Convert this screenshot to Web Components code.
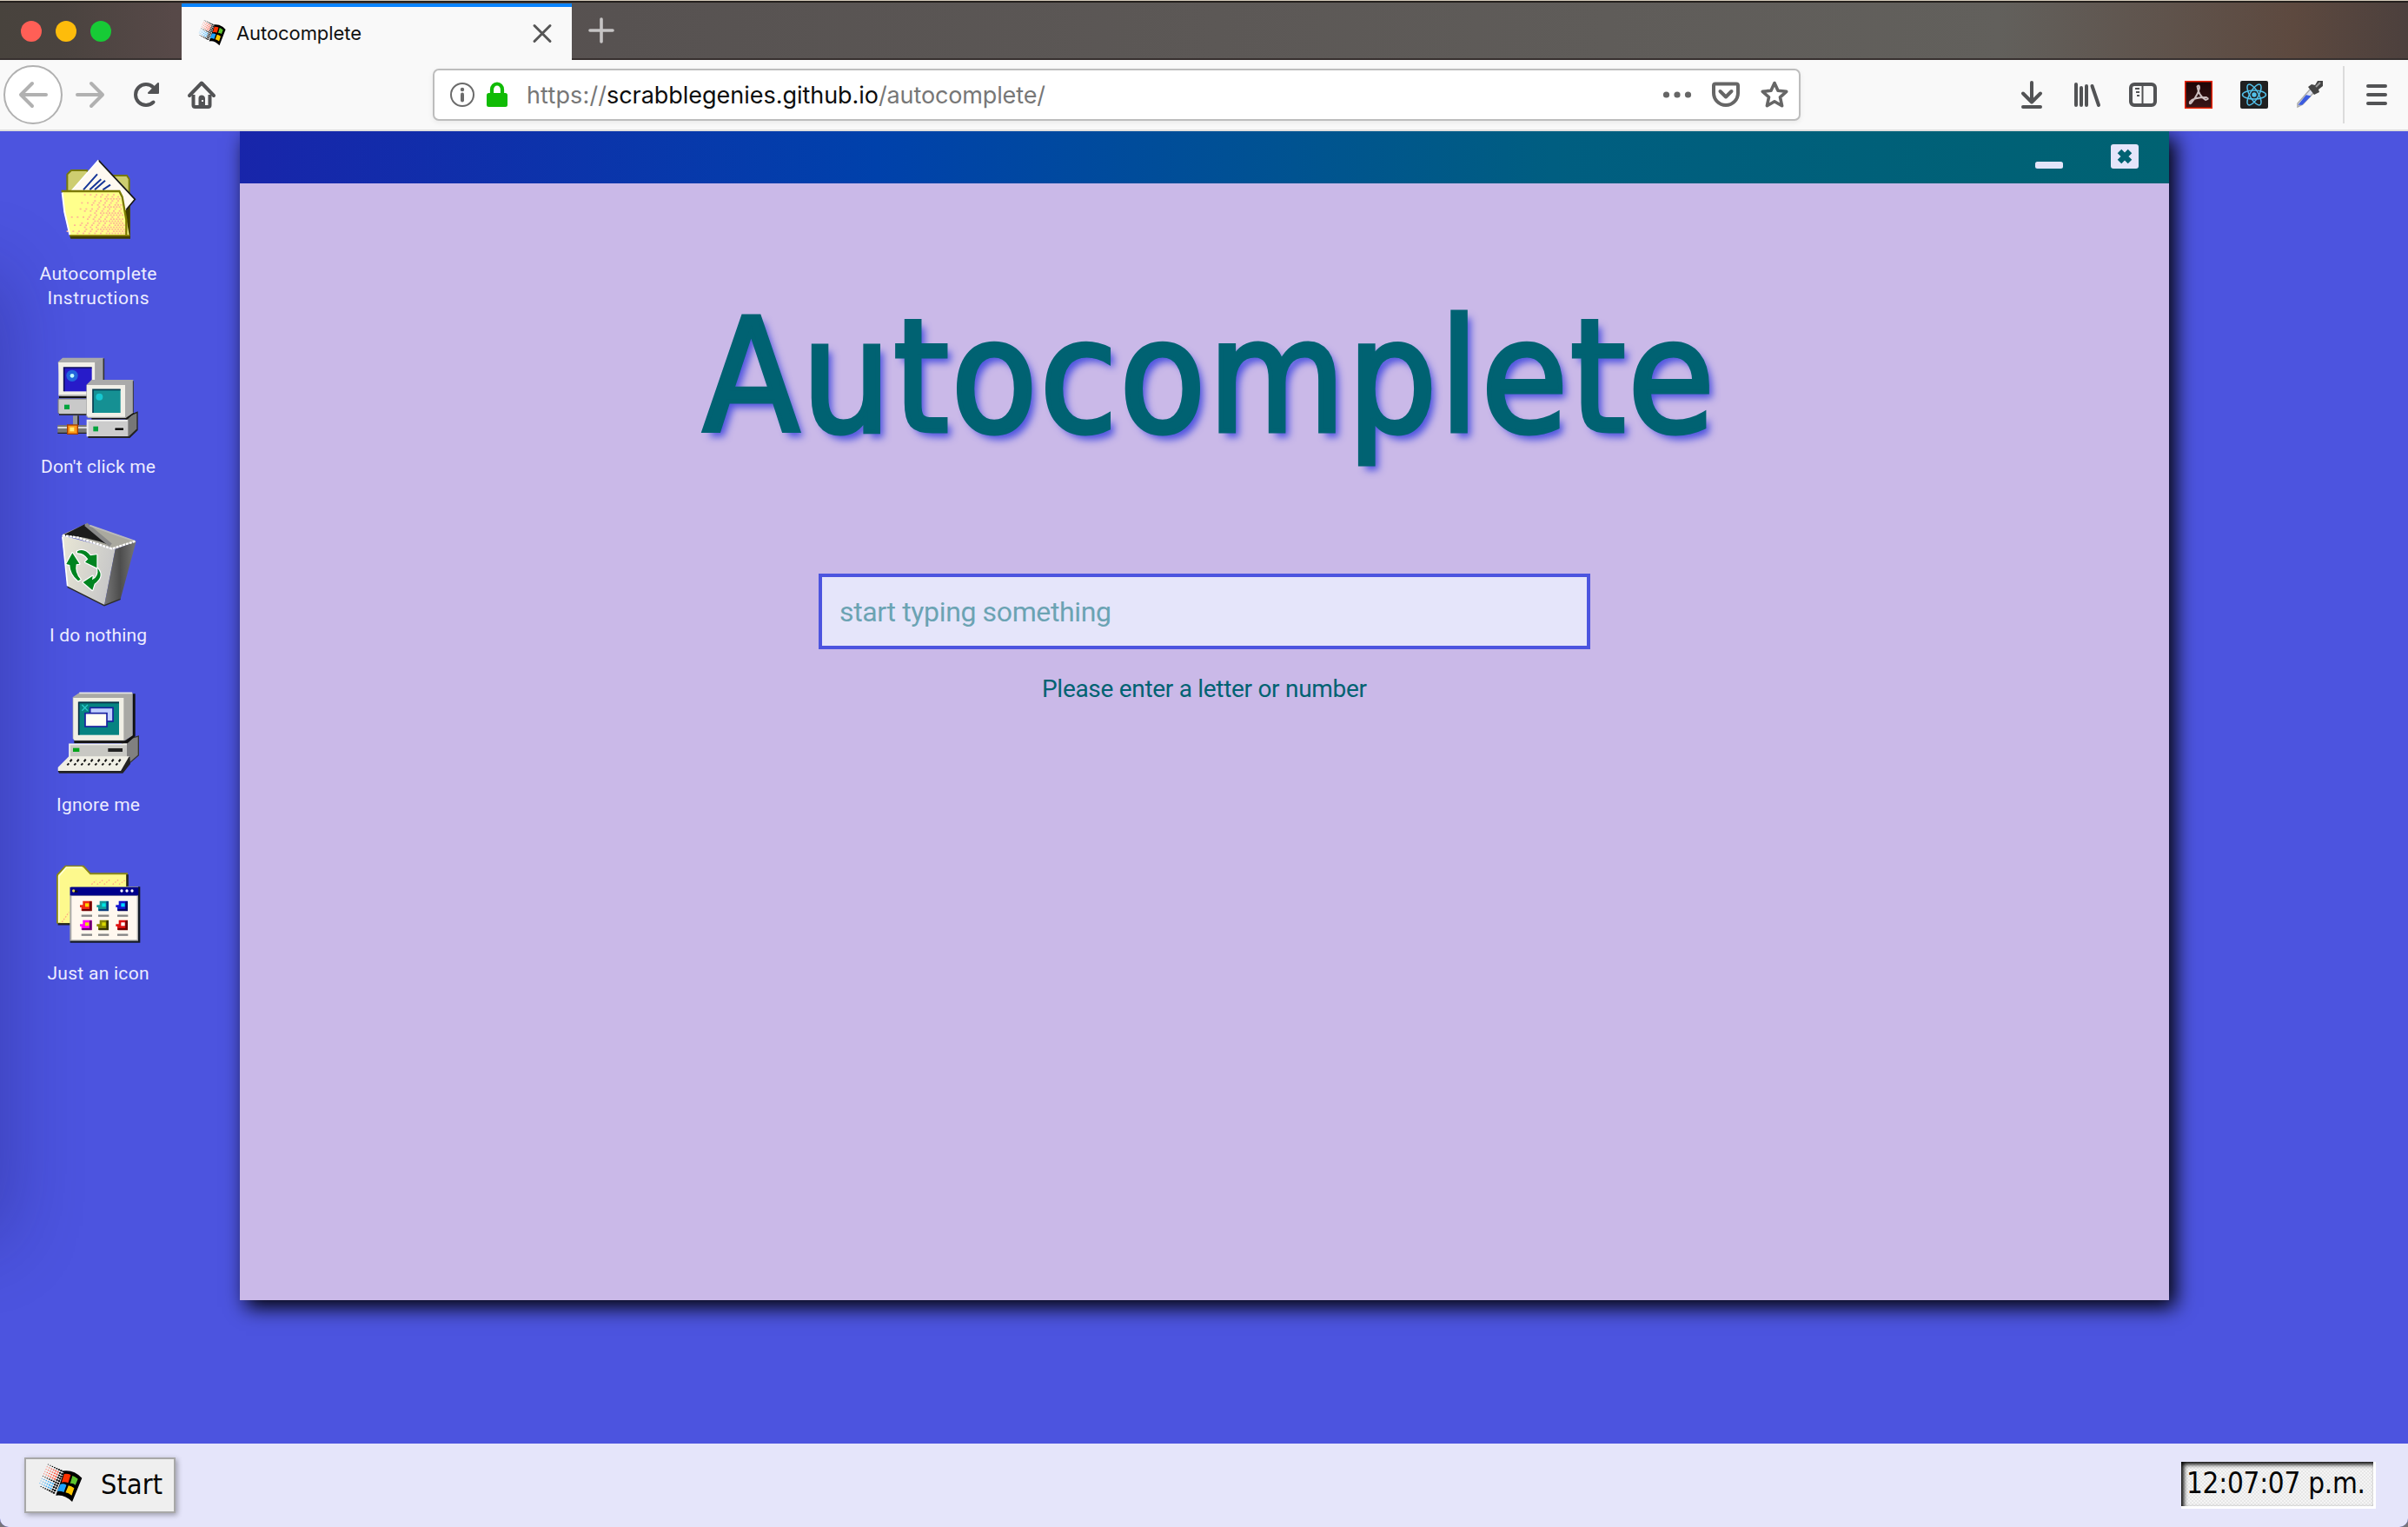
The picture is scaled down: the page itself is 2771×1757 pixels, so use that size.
<!DOCTYPE html>
<html lang="en">
<head>
<meta charset="utf-8">
<title>Autocomplete</title>
<style>
html,body{margin:0;height:100%;overflow:hidden;background:#77747a}
body{font-family:Roboto,"Liberation Sans",sans-serif}
</style>
</head>
<body>
<browser-window></browser-window>
<script>
const define=(name,html,after)=>customElements.define(name,class extends HTMLElement{
  constructor(){super();this.attachShadow({mode:'open'});}
  connectedCallback(){
    this.shadowRoot.innerHTML=typeof html==='function'?html(this):html;
    if(after)after(this);
  }
});

/* Text whose tracking is adjusted to fill a given width */
define('fit-text','<style>:host{display:inline-block;white-space:pre}span{display:inline-block}</style><span><slot></slot></span>',el=>{
  const s=el.shadowRoot.querySelector('span'),w=+el.getAttribute('w');
  const n=el.textContent.length;
  const ls=(w-s.getBoundingClientRect().width)/(n-1);
  s.style.letterSpacing=ls+'px';
  s.style.marginRight=-ls+'px';
});

/* Waving flag logo */
const flag=(()=>{
  let d='';
  for(let c=0;c<8;c++){
    const size=3+c*.62;
    for(let r=0;r<10;r++){
      const x=163+c*7.2-r*3.6, y=130+r*8.1+c*3.3;
      if(x<131)continue;
      const black=r===0||r===9||c>=6||r===5;
      const fill=black?'#000':(r<5?'#ff4a30':'#2aa6f5');
      d+=`<rect x="${x}" y="${y}" width="${size}" height="${size*.8}" fill="${fill}"/>`;
    }
  }
  return d+`<path d="M221 153Q255 150 282 178L248 260Q222 233 191 238Z" fill="#000"/>
  <path d="M220 164Q232 162 243 167L234 195Q223 190 211 193Z" fill="#ff3200"/>
  <path d="M249 170Q259 173 268 181L259 202Q251 195 241 197Z" fill="#5fc52e"/>
  <path d="M207 199Q218 196 228 202L219 227Q208 222 196 224Z" fill="#1ea2fb"/>
  <path d="M235 204Q245 206 255 213L246 238Q235 229 225 228Z" fill="#ffc800"/>`;
})();
define('flag-logo','<style>:host{display:block;flex:none}svg{display:block;width:100%;height:100%}</style><svg viewBox="130 125 154 138" preserveAspectRatio="none">'+flag+'</svg>');

const G='#525355';
const glyphs={
 back:`<path d="M31 16H3M15 3L2 16L15 29" fill="none" stroke="#b1b1b1" stroke-width="4" stroke-linecap="round" stroke-linejoin="round"/>`,
 fwd:`<path d="M1 16H29M17 3L30 16L17 29" fill="none" stroke="#b1b1b1" stroke-width="4" stroke-linecap="round" stroke-linejoin="round"/>`,
 reload:`<path d="M24.500 24.500A12 12 0 1 1 24.500 7.500L28 11" fill="none" stroke="${G}" stroke-width="4" stroke-linecap="round"/><path d="M30 3V14H19Z" fill="${G}" stroke="${G}" stroke-width="2" stroke-linejoin="round"/>`,
 home:`<path d="M2 17L16 2.500L30 17" fill="none" stroke="${G}" stroke-width="4" stroke-linecap="round" stroke-linejoin="round"/><path d="M6.500 16V28Q6.500 30 8.500 30H23.500Q25.500 30 25.500 28V16" fill="none" stroke="${G}" stroke-width="4"/><path d="M12.500 30V20Q12.500 16.500 16 16.500T20 20V30Z" fill="${G}"/><rect x="16" y="22" width="2" height="2" fill="#fff"/>`,
 info:`<circle cx="16" cy="16" r="13" fill="none" stroke="#6b6b6b" stroke-width="2"/><circle cx="16" cy="10" r="2.200" fill="#6b6b6b"/><path d="M16 15.500V22.500" stroke="#6b6b6b" stroke-width="4" stroke-linecap="round"/>`,
 lock:`<rect x="4" y="14" width="24" height="16" rx="2.500" fill="#10bb05"/><path d="M10 15V10A6 6.500 0 0 1 22 10V15" fill="none" stroke="#10bb05" stroke-width="4.200"/>`,
 dots:`<g fill="#666"><circle cx="3.500" cy="16" r="3.600"/><circle cx="16" cy="16" r="3.600"/><circle cx="28.500" cy="16" r="3.600"/></g>`,
 pocket:`<path d="M4 3.500H28Q30 3.500 30 5.500V14A14 14 0 0 1 2 14V5.500Q2 3.500 4 3.500Z" fill="none" stroke="#666" stroke-width="4"/><path d="M9.500 12L16 18.500L22.500 12" fill="none" stroke="#666" stroke-width="4" stroke-linecap="round" stroke-linejoin="round"/>`,
 star:`<path d="M16 2.500L20 11.300L29.700 12.300L22.500 18.800L24.600 28.700L16 23.700L7.400 28.700L9.500 18.800L2.300 12.300L12 11.300Z" fill="none" stroke="#666" stroke-width="3.600" stroke-linejoin="round"/>`,
 down:`<path d="M16 2V24M6 14.500L16 24.500L26 14.500M6 30H26" fill="none" stroke="${G}" stroke-width="4" stroke-linecap="round" stroke-linejoin="round"/>`,
 lib:`<path d="M3 4V28M9 8V28M15 6V28M21.500 6L29 28" fill="none" stroke="${G}" stroke-width="4" stroke-linecap="round"/>`,
 side:`<rect x="2" y="4" width="28" height="24" rx="4" fill="none" stroke="${G}" stroke-width="4"/><path d="M15.500 4V28M7 9H12M8 13H12M9 17H12" stroke="${G}" stroke-width="2"/>`,
 acro:`<defs><linearGradient id="a" x2="0" y2="1"><stop stop-color="#1c0405"/><stop offset="1" stop-color="#3b1618"/></linearGradient></defs><rect x=".7" y=".7" width="30.600" height="30.600" fill="url(#a)" stroke="#ee2200" stroke-width="1.500"/><path d="M14.500 6.500Q17 4 17 8Q16 15 8 25Q5 28 6 24Q10 19 25 19Q29 21 24 22Q16 17 14.500 6.500Z" fill="none" stroke="#cdbfc0" stroke-width="1.900"/>`,
 react:`<rect width="32" height="32" rx="2" fill="#202020"/><g fill="none" stroke="#53c1ea" stroke-width="1.500"><ellipse cx="16" cy="16" rx="13.500" ry="5"/><ellipse cx="16" cy="16" rx="13.500" ry="5" transform="rotate(60 16 16)"/><ellipse cx="16" cy="16" rx="13.500" ry="5" transform="rotate(120 16 16)"/></g><circle cx="16" cy="16" r="2.700" fill="#53c1ea"/>`,
 drop:`<path d="M17 9L21 13L8 27L2 30L2 26Z" fill="#dfe2ef" stroke="#aaa" stroke-width="1.500"/><path d="M12 17L16 18L7 27L4 27Z" fill="#3c5ce0" stroke="#3c5ce0" stroke-width="1.500"/><path d="M14 7L18 4L22 5L25 0H31V6L26 10L27 13L21 16Z" fill="#444"/><path d="M23 7L28 2" stroke="#999" stroke-width="2"/>`,
 menu:`<path d="M6 6H26M6 16H26M6 26H26" stroke="${G}" stroke-width="4" stroke-linecap="round"/>`,
 x:`<path d="M7 7.500L25 25.500M25 7.500L7 25.500" stroke="#565656" stroke-width="3" stroke-linecap="round"/>`,
 plus:`<path d="M3 16H29M16 3V29" stroke="#c6c4c4" stroke-width="3.600" stroke-linecap="round"/>`,
 min:`<rect y="22" width="32" height="8" rx="2.500" fill="#e5e5fa"/>`,
 close:`<rect y="2" width="32" height="28" rx="3" fill="#e5e5fa"/><path d="M10 10L22 22M22 10L10 22" stroke="#006272" stroke-width="6.400"/>`
};
define('glyph-icon',el=>`<style>:host{display:block;flex:none;width:32px;height:32px}svg{display:block;overflow:visible}</style><svg width="32" height="32" viewBox="0 0 32 32">${glyphs[el.getAttribute('name')]}</svg>`);

/* Desktop pictures */
const keys=[...Array(8)].map((_,i)=>`<path d="M${112+i*24} 298l6-6m4-6l6-8" stroke="#111" stroke-width="6"/>`).join('');
const mini=(x,y,a,b,c)=>`<path d="M${x} ${y}h31v34h-36v-12h-5v-8h10z" fill="${a}"/><path d="M${x+31} ${y+2}v33h-34v-7h26v-26z" fill="${b}"/><rect x="${x+8}" y="${y+8}" width="13" height="12" fill="${c}"/><path d="M${x-5} ${y+51}h37" stroke="#858585" stroke-width="7"/>`;
/* Orange dither dots that grow denser towards the lower right of the folder */
const dither=(()=>{
  let d='';
  for(let y=160,r=0;y<298;y+=7,r++)for(let x=110+(r%2)*5;x<314;x+=10){
    const t=(x-120)/190+(y-230)/420, h=((x*73+y*151)%97)/97;
    if(h<t&&x<290+(y-160)*.16)d+=`<rect x="${x}" y="${y}" width="6" height="5"/>`;
  }
  return `<g fill="#ffb596">${d}</g>`;
})();
const pics={
 folder:['48',`<path d="M112 155V92L126 78H180L190 96H318L326 108V303H125Z" fill="#cdcd70" stroke="#77790d" stroke-width="6"/>
 <path d="M120 303H330V314H124ZM305 190l24 0v115h-20z" fill="#3f3d00"/>
 <path d="M220 43L346 178L316 214L296 225L126 151Z" fill="#fff9f0"/><path d="M220 43L346 178L316 214" fill="none" stroke="#171717" stroke-width="5"/><path d="M220 43L126 150" stroke="#fff" stroke-width="5"/>
 <path d="M168 145l48-54M190 145l39-36M207 145l36-32M235 145l26-17" stroke="#153597" stroke-width="6"/>
 <path d="M96 152H292L314 230L326 302H120L101 220Z" fill="#ffff8c"/>${dither}<path d="M92 150H292L302 170L316 249V302" fill="none" stroke="#7b7a00" stroke-width="7"/><path d="M95 155L103 222L121 300" fill="none" stroke="#fff" stroke-width="6"/><path d="M120 303H328" stroke="#8b8000" stroke-width="5"/>`],
 net:['21',`<path d="M80 47L96 32H238V166H92Z" fill="#aaa"/><path d="M238 34V110" stroke="#333" stroke-width="5"/><path d="M82 48H208V162H82Z" fill="#f1efe8"/><path d="M208 48L234 34V110H208Z" fill="#a5a5a5"/><path d="M82 162H190" stroke="#aaa" stroke-width="5"/><rect x="101" y="66" width="96" height="82" fill="#271bc9"/><path d="M101 148V66H197" fill="none" stroke="#11105b" stroke-width="5"/><circle cx="129" cy="94" r="20" fill="#2166dd"/><circle cx="129" cy="94" r="7" fill="#bfffff"/>
 <path d="M84 168H182" stroke="#111" stroke-width="6"/><path d="M81 174H182V228H87L81 222Z" fill="#c9c9c9" stroke="#777" stroke-width="3"/><path d="M84 228H182" stroke="#222" stroke-width="5"/><rect x="102" y="194" width="18" height="16" fill="#00a43e"/>
 <path d="M132 232h20v34h-20z" fill="#969696"/><path d="M150 232v34" stroke="#222" stroke-width="5"/><path d="M79 264H182V292H79Z" fill="#777"/><path d="M79 273H182" stroke="#d7d7d7" stroke-width="6"/><path d="M79 292H182" stroke="#222" stroke-width="4"/><rect x="113" y="264" width="35" height="31" fill="#ff9b16" stroke="#a63d00" stroke-width="4"/><rect x="121" y="272" width="15" height="14" fill="#ffe973"/>
 <path d="M318 236L354 220V280L328 306L300 300Z" fill="#777" stroke="#222" stroke-width="4"/><path d="M182 246H322V304H182Z" fill="#ccc"/><path d="M182 304V248H320" fill="none" stroke="#efefef" stroke-width="6"/><path d="M184 306H326L354 280" fill="none" stroke="#242424" stroke-width="6"/><rect x="202" y="269" width="17" height="17" fill="#00a43e"/><rect x="276" y="273" width="31" height="10" fill="#111" stroke="#eee" stroke-width="2"/>
 <path d="M196 240H318L340 220" fill="none" stroke="#111" stroke-width="9"/><path d="M178 126L196 108H340V222L314 240H184L178 234Z" fill="#aaa"/><path d="M180 126H312V236H184L180 230Z" fill="#f1efe8"/><path d="M340 112V220" stroke="#333" stroke-width="3"/><rect x="201" y="141" width="95" height="81" fill="#159093"/><path d="M201 222V142H296" fill="none" stroke="#063b4f" stroke-width="5"/><circle cx="223" cy="167" r="12" fill="#16c7d0"/>`],
 bin:['36',`<defs><linearGradient id="g" x2="1" y2=".3"><stop stop-color="#e9e7d6"/><stop offset="1" stop-color="#c8c8c8"/></linearGradient><linearGradient id="h"><stop stop-color="#777"/><stop offset=".5" stop-color="#4d4d4d"/><stop offset="1" stop-color="#777"/></linearGradient></defs><path d="M94 76L176 38L350 98L278 126Z" fill="#aaa99f"/><path d="M96 78L172 40L258 112Q180 80 96 78Z" fill="#1c1c1c"/><path d="M176 40L262 112" stroke="#888" stroke-width="14"/><path d="M190 44L345 98" stroke="#bbb" stroke-width="6"/>
 <path d="M94 78L278 126L240 320L113 254Z" fill="url(#g)"/><path d="M278 126L350 98L296 298L240 320Z" fill="url(#h)"/><path d="M96 78L150 86L266 124L348 98" fill="none" stroke="#fff" stroke-width="7" stroke-dasharray="9 3"/><path d="M113 256L240 320L296 298" fill="none" stroke="#2d2d28" stroke-width="4"/><path d="M96 84L113 252" stroke="#fff" stroke-width="5"/>
 <path d="M147 133Q171 120 192 148L214 145V190L174 170L184 160Q168 137 147 139ZM109 177L130 139L154 176L143 178Q137 207 158 230L150 235Q122 212 121 180ZM217 192Q241 220 206 245L199 267L167 240L200 218L198 232Q221 222 217 192Z" fill="#008420" stroke="#fff" stroke-width="7" stroke-linejoin="round" paint-order="stroke"/>`],
 pc:['48',`<path d="M320 208L358 198V264L328 290H300V226Z" fill="#808080" stroke="#333" stroke-width="4"/><path d="M136 218H318L342 196V52" fill="none" stroke="#111" stroke-width="10"/><path d="M131 64L154 48H338V196L310 214H137L131 206Z" fill="#a9a9a5"/><path d="M133 66H307V212H137L133 206Z" fill="#f1efe5"/><path d="M154 49H336" stroke="#e4e4e4" stroke-width="5"/><rect x="152" y="80" width="139" height="114" fill="#078381"/><path d="M152 194V82H291" fill="none" stroke="#0b3046" stroke-width="5"/><path d="M163 90l20 20m0-20l-20 20" stroke="#29cac9" stroke-width="4"/>
 <rect x="191" y="100" width="79" height="47" fill="#bfcfff" stroke="#1921a0" stroke-width="5"/><rect x="174" y="119" width="75" height="46" fill="#fffff5" stroke="#1921a0" stroke-width="5"/>
 <path d="M120 226H318V274H120Z" fill="#c8c8c3"/><path d="M120 270V226H318" fill="none" stroke="#f2f2ed" stroke-width="5"/><rect x="132" y="239" width="22" height="13" fill="#00a41a"/><rect x="253" y="240" width="50" height="12" fill="#222"/>
 <path d="M80 318L118 270H328L330 294L304 326H84Z" fill="#222"/><path d="M80 306L118 268H326L297 318H80Z" fill="#f0efe5"/>${keys}`],
 apps:['30',`<path d="M78 77L106 47H168L192 73H318V246H88L78 242Z" fill="#fdf98d" stroke="#898616" stroke-width="6"/><path d="M83 242V82L109 51H164" fill="none" stroke="#ffffd8" stroke-width="5"/><path d="M80 247H122M320 76V116" stroke="#222" stroke-width="7"/><path d="M196 110l16-14m3 14l24-18m0 18l22-18m8 18l22-18m0 18l20-14M94 240l24-34" stroke="#ffab83" stroke-width="4" stroke-dasharray="5 5"/>
 <path d="M126 118H364V311H122Z" fill="#151b25"/><rect x="121" y="118" width="236" height="187" fill="#aaa"/><rect x="127" y="150" width="226" height="151" fill="#fff8ef"/><rect x="122" y="120" width="236" height="28" fill="#00008b"/><circle cx="134" cy="132" r="5" fill="#ddd04e"/><path d="M138 134h10" stroke="#111" stroke-width="6"/><g fill="#fff"><circle cx="300" cy="132" r="5"/><circle cx="318" cy="132" r="5"/><circle cx="336" cy="132" r="5"/></g>
 ${mini(166,167,'#ee2814','#730000','#ffd500')}${mini(224,167,'#169999','#073d7c','#00e5e5')}${mini(290,167,'#1515cd','#00005d','#00d9ff')}${mini(166,233,'#ff00ff','#6a006c','#e5e500')}${mini(224,233,'#898900','#343400','#d9d900')}${mini(290,233,'#de1010','#690000','#fff')}`]
};
define('desktop-item',el=>{
  const p=pics[el.getAttribute('pic')];
  return `<style>:host{display:flex;flex-direction:column;align-items:center;gap:19px;padding-bottom:51.2px;color:#ececff;font-size:21px;line-height:28px}
  svg{display:block;overflow:visible;width:96px;height:96px}.l{display:flex;flex-direction:column;align-items:center}</style>
  <svg viewBox="75 ${p[0]} 288 288">${p[1]}</svg><div class="l"><slot></slot></div>`;
});

define('nav-bar',`<style>:host{display:flex;align-items:center;height:80px;box-sizing:content-box;border-bottom:2px solid #dedede;background:#f9f9f9;padding-left:4px}
.back{width:64px;height:64px;border:2px solid #b1b1b1;border-radius:50%;background:#fff;display:flex;align-items:center;justify-content:center;margin-right:16px}
.g{display:flex;gap:32px;width:410px}
.url{box-sizing:border-box;width:1574px;height:60px;border:2px solid #bdbdbd;border-radius:7px;background:#fff;display:flex;align-items:center;padding:0 12px 0 16px;box-shadow:0 2px 6px #0001;font:27px/54px Inter,sans-serif;color:#777}
.url .t{display:flex;margin-left:18px;flex:1;padding-top:2px}.d{color:#0c0c0d}.url .s{display:flex;gap:24px}
.r{display:flex;gap:32px;margin-left:250px}
.m{border-left:2px solid #dcdcdc;height:66px;margin-left:22px;padding-left:21px;display:flex;align-items:center}</style>
<div class="back"><glyph-icon name="back"></glyph-icon></div>
<div class="g"><glyph-icon name="fwd"></glyph-icon><glyph-icon name="reload"></glyph-icon><glyph-icon name="home"></glyph-icon></div>
<div class="url"><glyph-icon name="info"></glyph-icon><glyph-icon name="lock" style="margin-left:8px"></glyph-icon>
<div class="t"><fit-text w="92">https://</fit-text><fit-text class="d" w="313">scrabblegenies.github.io</fit-text><fit-text w="192">/autocomplete/</fit-text></div>
<div class="s"><glyph-icon name="dots"></glyph-icon><glyph-icon name="pocket"></glyph-icon><glyph-icon name="star"></glyph-icon></div></div>
<div class="r"><glyph-icon name="down"></glyph-icon><glyph-icon name="lib"></glyph-icon><glyph-icon name="side"></glyph-icon><glyph-icon name="acro"></glyph-icon><glyph-icon name="react"></glyph-icon><glyph-icon name="drop"></glyph-icon></div>
<div class="m"><glyph-icon name="menu"></glyph-icon></div>`);

define('tab-strip',`<style>:host{display:flex;box-sizing:border-box;height:69px;padding-top:3px;border-top:1px solid #d3c9b9;background:linear-gradient(#24201d,#24201d) 0 0/100% 2px no-repeat,linear-gradient(#37302f,#37302f) 0 100%/100% 2px no-repeat,linear-gradient(90deg,#48433d 0,#4a433f 70px,#574948 200px,#575251 700px,#5c5856 1400px,#62605c 2300px,#5d493f 2640px,#4c403d 2771px)}
.c{display:flex;gap:16px;padding:20px 0 0 24px;width:185px}.c i{width:24px;height:24px;border-radius:50%}
.tab{box-sizing:border-box;width:449px;height:65px;border-top:4px solid #0a84ff;background:#f9f9f9;display:flex;align-items:center;padding:0 18px 2px 19px;font:22px/32px Inter,sans-serif;color:#111}
flag-logo{width:32px;height:31px;margin-right:12px}.tab glyph-icon{margin-left:auto}
.p{padding:15px 0 0 18px}</style>
<div class="c"><i style="background:#ff5f56"></i><i style="background:#fdbc0b"></i><i style="background:#17cb36"></i></div>
<div class="tab"><flag-logo></flag-logo><fit-text w="144">Autocomplete</fit-text><glyph-icon name="x"></glyph-icon></div><div class="p"><glyph-icon name="plus"></glyph-icon></div>`);

define('app-window',`<style>:host{display:flex;flex-direction:column;width:2220px;height:1345px;background:#cab9e8;box-shadow:7px 8px 22px #000;color:#006272}
header{height:60px;background:linear-gradient(90deg,#1825aa,#0041ab 33%,#005e81 68%,#006272);display:flex;justify-content:flex-end;gap:55px;padding:13px 35px 0 0;box-sizing:border-box;flex:none}
main{display:flex;flex-direction:column;align-items:center}
h1{margin:113px 0 0 10px;font:400 180px/220px "DejaVu Sans Condensed","DejaVu Sans",sans-serif;font-stretch:condensed;-webkit-text-stroke:5px #006272;text-shadow:6px 7px 8px #4c52df}
.in{box-sizing:border-box;width:888px;height:87px;margin-top:116px;border:4px solid #4c54df;background:#e5e5fa;display:flex;align-items:center;padding-left:20px;font-size:32px;line-height:40px;color:#6ba3b3}
.msg{margin-top:29px;font-size:28px;line-height:34px}</style>
<header><glyph-icon name="min"></glyph-icon><glyph-icon name="close"></glyph-icon></header>
<main><h1><fit-text w="1164">Autocomplete</fit-text></h1><div class="in"><fit-text w="313">start typing something</fit-text></div><div class="msg"><fit-text w="374">Please enter a letter or number</fit-text></div></main>`);

define('task-bar',`<style>:host{display:flex;box-sizing:border-box;height:96px;background:#e5e5fa;justify-content:space-between;padding:16px 37px 0 28px;font-family:"DejaVu Sans Condensed","DejaVu Sans",sans-serif;font-stretch:condensed;color:#050505}
.s{box-sizing:border-box;width:174px;height:64px;border:2px solid #a8a8a8;background:#efefef;box-shadow:2px 2px 6px #0005;display:flex;padding:4px 0 0 14px;font-size:32px;line-height:51px}
flag-logo{width:51px;height:46px;margin-right:21px}
.k{box-sizing:border-box;width:224px;height:54px;margin-top:5px;border:solid #fff;border-width:0 3px 3px 0;background:repeating-conic-gradient(#f5f5f5 0 25%,#e7e7e7 0 50%) 0 0/4px 4px;box-shadow:inset 3px 3px 5px #000;padding-left:6px;font-size:33px;line-height:50px}</style>
<div class="s"><flag-logo></flag-logo><fit-text w="71">Start</fit-text></div><div class="k"><fit-text w="206">12:07:07 p.m.</fit-text></div>`);

define('browser-window',`<style>:host{display:flex;flex-direction:column;height:1757px;overflow:hidden;border-radius:0 0 10px 10px;background:#4c54df}
.desk{flex:1;display:flex;background:#4c54df;position:relative;overflow:hidden}
.desk:before{content:"";position:absolute;left:-60px;top:190px;width:40px;height:1060px;box-shadow:0 0 90px 24px #15155a55}
nav{position:relative;width:226px;margin-right:50px;padding-top:35px}
</style>
<tab-strip></tab-strip><nav-bar></nav-bar>
<div class="desk"><nav>
<desktop-item pic="folder"><fit-text w="135">Autocomplete</fit-text><fit-text w="117">Instructions</fit-text></desktop-item>
<desktop-item pic="net"><fit-text w="132">Don't click me</fit-text></desktop-item>
<desktop-item pic="bin"><fit-text w="112">I do nothing</fit-text></desktop-item>
<desktop-item pic="pc"><fit-text w="96">Ignore me</fit-text></desktop-item>
<desktop-item pic="apps"><fit-text w="117">Just an icon</fit-text></desktop-item>
</nav><app-window></app-window></div><task-bar></task-bar>`);
</script>
</body>
</html>
